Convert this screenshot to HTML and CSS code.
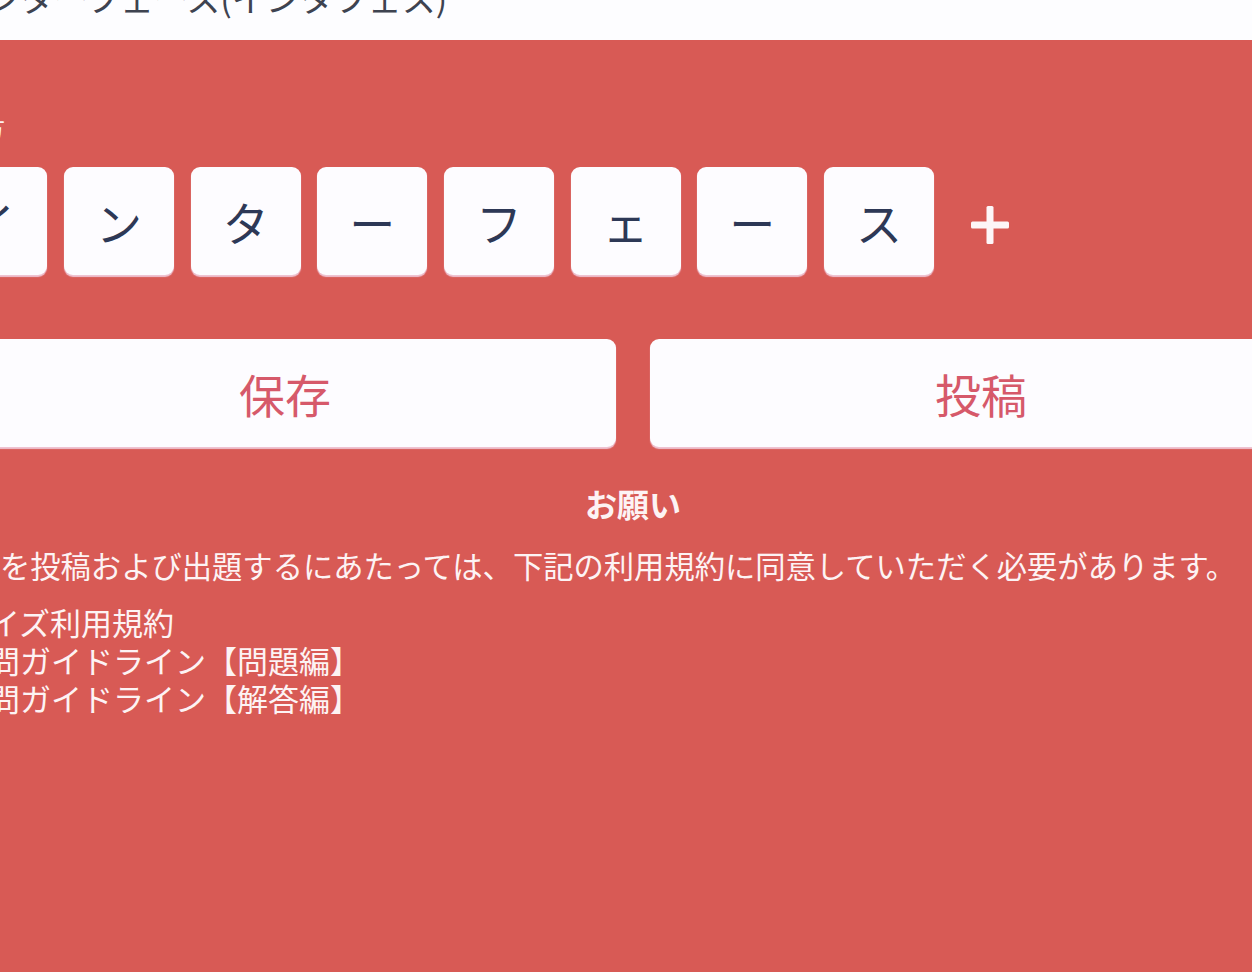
FILE: index.html
```html
<!DOCTYPE html>
<html lang="ja">
<head>
<meta charset="utf-8">
<title>クイズ作成</title>
<link rel="stylesheet" href="styles.css">
</head>
<body>
<header class="topbar">
  <h1 class="title">インターフェース(インタフェス)</h1>
</header>
<main class="panel">
  <div class="wrap">
    <div class="field-label">読み方</div>
    <div class="tiles">
      <div class="tile">イ</div>
      <div class="tile">ン</div>
      <div class="tile">タ</div>
      <div class="tile">ー</div>
      <div class="tile">フ</div>
      <div class="tile">ェ</div>
      <div class="tile">ー</div>
      <div class="tile">ス</div>
      <div class="add" aria-label="追加">
        <svg width="40" height="42" viewBox="0 0 40 42"><rect x="1" y="17.5" width="38" height="7" rx="1.5" fill="#fdf6f8"/><rect x="16.5" y="2" width="7" height="38" rx="1.5" fill="#fdf6f8"/></svg>
      </div>
    </div>
    <div class="actions">
      <button class="btn">保存</button>
      <button class="btn">投稿</button>
    </div>
    <section class="notice">
      <h2 class="notice-title">お願い</h2>
      <p class="notice-text">クイズを投稿および出題するにあたっては、下記の利用規約に同意していただく必要があります。</p>
      <ul class="links">
        <li>クイズ利用規約</li>
        <li>作問ガイドライン【問題編】</li>
        <li>作問ガイドライン【解答編】</li>
      </ul>
    </section>
  </div>
</main>
</body>
</html>
```
FILE: styles.css
```css
html, body {
  margin: 0;
  padding: 0;
  height: 100%;
  overflow: hidden;
}
body {
  font-family: "Noto Sans CJK JP", "Noto Sans", sans-serif;
  background: #d85a55;
}
.topbar {
  height: 40px;
  background: #fdfdff;
  overflow: hidden;
}
.title {
  margin: -19px 0 0 -48px;
  font-size: 34px;
  line-height: 34px;
  font-weight: 400;
  color: #3e4350;
  white-space: nowrap;
}
.panel {
  background: #d85a55;
  height: 932px;
  padding-top: 72px;
  box-sizing: border-box;
}
.wrap {
  width: 1358px;
  margin-left: -46px;
}
.field-label {
  margin-left: -18px;
  font-size: 23px;
  line-height: 30px;
  color: #fdf2f2;
  white-space: nowrap;
}
.tiles {
  display: flex;
  align-items: center;
  gap: 16.67px;
  margin: 25px 0 0 -16.7px;
}
.tile {
  width: 110px;
  height: 108px;
  flex: none;
  background: #fdfcff;
  border-radius: 9px;
  box-shadow: 0 2px 1px #efc3d2;
  display: flex;
  align-items: center;
  justify-content: center;
  font-size: 46px;
  color: #2d3856;
}
.add {
  margin-left: 19px;
  margin-top: 8px;
  display: flex;
}
.actions {
  display: flex;
  gap: 34px;
  margin-top: 64px;
}
.btn {
  flex: 1;
  height: 108px;
  border: none;
  border-radius: 9px;
  background: #fdfcff;
  box-shadow: 0 2px 1px #efc3d2;
  font-family: inherit;
  font-size: 46px;
  color: #d6596a;
  padding: 0;
}
.notice {
  margin-top: 34px;
  color: #fdf3f4;
}
.notice-title {
  margin: 0;
  text-align: center;
  font-size: 32px;
  line-height: 44px;
  font-weight: 700;
}
.notice-text {
  margin: 20px 0 0 -44px;
  font-size: 30.3px;
  line-height: 40px;
  white-space: nowrap;
}
.links {
  list-style: none;
  margin: 18px 0 0 4px;
  padding: 0;
  font-size: 31px;
  line-height: 38px;
  white-space: nowrap;
}
```
